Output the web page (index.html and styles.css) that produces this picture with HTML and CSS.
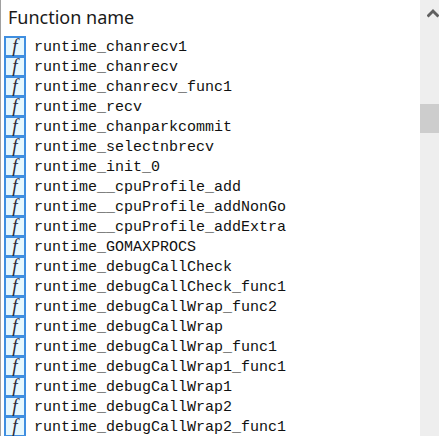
FILE: index.html
```html
<!DOCTYPE html>
<html lang="en">
<head>
    <meta charset="UTF-8">
    <title>Function name</title>
    <link rel="stylesheet" href="styles.css">
</head>
<body>
    <div class="panel">
        <div class="content">
            <div class="header">Function name</div>
            <ul class="list" id="list"></ul>
        </div>
        <div class="scrollbar">
            <svg class="arrow" width="12" height="10" viewBox="0 0 12 10">
                <path d="M0.5 8.5 L6 3 L11.5 8.5" fill="none" stroke="#606060" stroke-width="3"/>
            </svg>
            <div class="thumb"></div>
        </div>
    </div>
    <script>
        var names = [
            "runtime_chanrecv1", "runtime_chanrecv", "runtime_chanrecv_func1", "runtime_recv",
            "runtime_chanparkcommit", "runtime_selectnbrecv", "runtime_init_0",
            "runtime__cpuProfile_add", "runtime__cpuProfile_addNonGo", "runtime__cpuProfile_addExtra",
            "runtime_GOMAXPROCS", "runtime_debugCallCheck", "runtime_debugCallCheck_func1",
            "runtime_debugCallWrap_func2", "runtime_debugCallWrap", "runtime_debugCallWrap_func1",
            "runtime_debugCallWrap1_func1", "runtime_debugCallWrap1", "runtime_debugCallWrap2",
            "runtime_debugCallWrap2_func1"
        ];
        var html = "";
        for (var i = 0; i < names.length; i++) {
            html += '<li class="row"><span class="icon">f</span><span class="name">' + names[i] + '</span></li>';
        }
        document.getElementById("list").innerHTML = html;
    </script>
</body>
</html>
```

FILE: styles.css
```css
html, body {
    margin: 0;
    height: 100%;
    overflow: hidden;
    background-color: #fff;
}
.panel {
    display: flex;
    height: 436px;
    border-left: 1px solid #a0a0a0;
}
.content {
    flex: 1;
    overflow: hidden;
}
.header {
    height: 36px;
    padding-left: 7px;
    font-family: "Noto Sans", sans-serif;
    font-size: 18px;
    line-height: 35px;
    color: #1a1a1a;
}
.list {
    list-style: none;
    margin: 0;
    padding: 0 0 0 3px;
}
.row {
    display: flex;
    align-items: center;
    gap: 8px;
    height: 20px;
}
.icon {
    box-sizing: border-box;
    flex: none;
    width: 22px;
    height: 20px;
    border: 2px solid #3f8ee0;
    border-bottom-width: 1px;
    background-color: #e6f7fd;
    font-family: "Liberation Serif", serif;
    font-style: italic;
    font-size: 19px;
    line-height: 16px;
    text-align: center;
    color: #2a2a3a;
}
.name {
    padding-top: 2px;
    font-family: "Liberation Mono", monospace;
    font-size: 15px;
    color: #111;
}
.scrollbar {
    width: 19px;
    background-color: #eeeeee;
    position: relative;
}
.arrow {
    display: block;
    margin: 8px 0 0 7px;
}
.thumb {
    position: absolute;
    top: 104px;
    left: 0;
    width: 100%;
    height: 29px;
    background-color: #cdcdcd;
}
```
